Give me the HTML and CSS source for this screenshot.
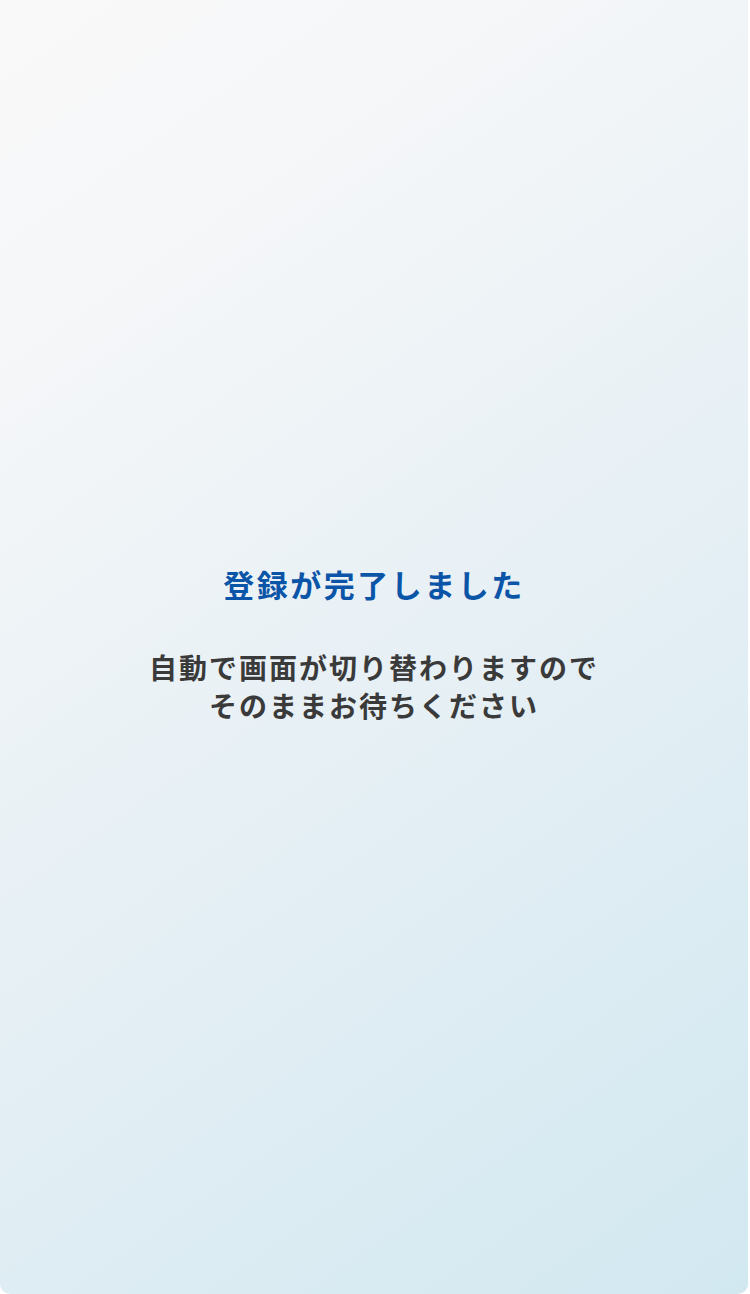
FILE: index.html
```html
<!DOCTYPE html>
<html lang="ja">

<head>
    <meta charset="UTF-8">
    <meta name="viewport" content="width=device-width, initial-scale=1.0">
    <title>登録完了</title>
    <link rel="stylesheet" href="styles.css">
</head>

<body>
    <div class="screen">
        <div class="complete">
            <h1 class="complete-title">登録が完了しました</h1>
            <p class="complete-text">自動で画面が切り替わりますので<br>そのままお待ちください</p>
        </div>
    </div>
</body>

</html>
```

FILE: styles.css
```css
/* General Reset */
* {
    margin: 0;
    padding: 0;
    box-sizing: border-box;
}

body {
    font-family: "Noto Sans CJK JP", "Noto Sans", sans-serif;
    background-color: #ffffff;
    height: 100vh;
}

.screen {
    width: calc(100% - 2px);
    height: 100%;
    display: flex;
    justify-content: center;
    align-items: center;
    background: linear-gradient(145deg, #f9f9f9 0%, #f6f7f9 18%, #e7f0f5 52%, #d2e8f1 100%);
    border-radius: 0 0 10px 10px;
}

.complete {
    text-align: center;
    margin-top: -6px;
}

.complete-title {
    font-size: 31px;
    font-weight: 700;
    letter-spacing: 2.5px;
    color: #0b55a8;
    line-height: 1.3;
    margin-bottom: 44px;
}

.complete-text {
    font-size: 28px;
    font-weight: 700;
    letter-spacing: 2px;
    line-height: 38px;
    color: #3a3a3a;
}
```
